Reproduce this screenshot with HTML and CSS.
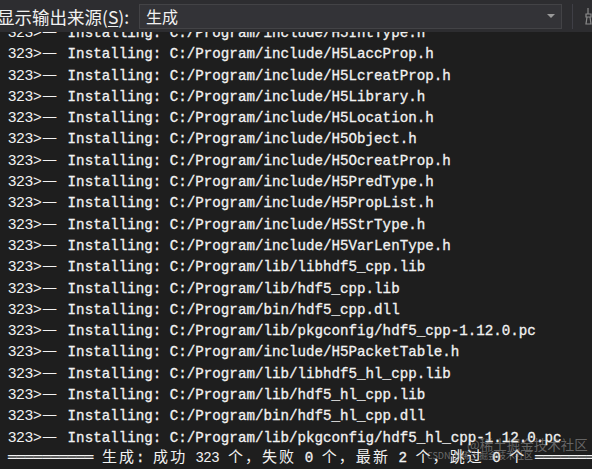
FILE: index.html
```html
<!DOCTYPE html>
<html lang="zh-CN">
<head>
<meta charset="utf-8">
<title>输出</title>
<link rel="stylesheet" href="styles.css">
</head>
<body>
<div class="pane">
  <div class="header">
    <div class="label">显示输出来源(<u>S</u>):</div>
    <div class="combo">
      <span class="combo-text">生成</span>
      <span class="arrow"></span>
    </div>
    <div class="sep"></div>
    <svg class="tool" width="14" height="18" viewBox="0 0 14 18"><path d="M3 1v6M1 7h5v3H1zM2 10l-1 7h5l-1-7" fill="none" stroke="#8a8a8a" stroke-width="1.2"/></svg>
  </div>
  <div class="output">
    <div class="lines">
      <div class="ln"><span class="pid">323&gt;</span><span class="dash">—</span> Installing: C:/Program/include/H5IntType.h</div>
      <div class="ln"><span class="pid">323&gt;</span><span class="dash">—</span> Installing: C:/Program/include/H5LaccProp.h</div>
      <div class="ln"><span class="pid">323&gt;</span><span class="dash">—</span> Installing: C:/Program/include/H5LcreatProp.h</div>
      <div class="ln"><span class="pid">323&gt;</span><span class="dash">—</span> Installing: C:/Program/include/H5Library.h</div>
      <div class="ln"><span class="pid">323&gt;</span><span class="dash">—</span> Installing: C:/Program/include/H5Location.h</div>
      <div class="ln"><span class="pid">323&gt;</span><span class="dash">—</span> Installing: C:/Program/include/H5Object.h</div>
      <div class="ln"><span class="pid">323&gt;</span><span class="dash">—</span> Installing: C:/Program/include/H5OcreatProp.h</div>
      <div class="ln"><span class="pid">323&gt;</span><span class="dash">—</span> Installing: C:/Program/include/H5PredType.h</div>
      <div class="ln"><span class="pid">323&gt;</span><span class="dash">—</span> Installing: C:/Program/include/H5PropList.h</div>
      <div class="ln"><span class="pid">323&gt;</span><span class="dash">—</span> Installing: C:/Program/include/H5StrType.h</div>
      <div class="ln"><span class="pid">323&gt;</span><span class="dash">—</span> Installing: C:/Program/include/H5VarLenType.h</div>
      <div class="ln"><span class="pid">323&gt;</span><span class="dash">—</span> Installing: C:/Program/lib/libhdf5_cpp.lib</div>
      <div class="ln"><span class="pid">323&gt;</span><span class="dash">—</span> Installing: C:/Program/lib/hdf5_cpp.lib</div>
      <div class="ln"><span class="pid">323&gt;</span><span class="dash">—</span> Installing: C:/Program/bin/hdf5_cpp.dll</div>
      <div class="ln"><span class="pid">323&gt;</span><span class="dash">—</span> Installing: C:/Program/lib/pkgconfig/hdf5_cpp-1.12.0.pc</div>
      <div class="ln"><span class="pid">323&gt;</span><span class="dash">—</span> Installing: C:/Program/include/H5PacketTable.h</div>
      <div class="ln"><span class="pid">323&gt;</span><span class="dash">—</span> Installing: C:/Program/lib/libhdf5_hl_cpp.lib</div>
      <div class="ln"><span class="pid">323&gt;</span><span class="dash">—</span> Installing: C:/Program/lib/hdf5_hl_cpp.lib</div>
      <div class="ln"><span class="pid">323&gt;</span><span class="dash">—</span> Installing: C:/Program/bin/hdf5_hl_cpp.dll</div>
      <div class="ln"><span class="pid">323&gt;</span><span class="dash">—</span> Installing: C:/Program/lib/pkgconfig/hdf5_hl_cpp-1.12.0.pc</div>
      <div class="ln"><span class="dbl">══════════</span> <span class="cj">生成</span>: <span class="cj">成功</span> <span class="num">323</span> <span class="cj">个，失败</span> 0 <span class="cj">个，最新</span> 2 <span class="cj">个，跳过</span> 0 <span class="cj">个</span> <span class="dbl">══════════</span></div>
    </div>
  </div>
  <div class="wm1">@稀土掘金技术社区</div>
  <div class="wm2">CSDN @稀土掘金技术社区</div>
</div>
</body>
</html>
```

FILE: styles.css
```css
html, body {
  margin: 0;
  padding: 0;
  background: #1e1e1e;
}

.pane {
  position: relative;
  width: 592px;
  height: 469px;
  overflow: hidden;
  background: #1e1e1e;
}

.header {
  height: 32px;
  display: flex;
  align-items: center;
  background: #2d2d30;
  font-family: "Noto Sans CJK SC", sans-serif;
  font-size: 16px;
  color: #f1f1f1;
}

.label {
  width: 142px;
  margin-left: -3px;
  font-size: 17.5px;
  white-space: nowrap;
  flex-shrink: 0;
}

.label u {
  text-decoration-thickness: 1px;
  text-underline-offset: 2px;
}

.combo {
  width: 423px;
  height: 25px;
  box-sizing: border-box;
  border: 1px solid #434346;
  background: #333337;
  display: flex;
  align-items: center;
  padding-left: 6px;
  flex-shrink: 0;
}

.combo-text {
  line-height: 1;
}

.arrow {
  margin-left: auto;
  margin-right: 6px;
  width: 0;
  height: 0;
  border-left: 4px solid transparent;
  border-right: 4px solid transparent;
  border-top: 4px solid #999999;
}

.sep {
  width: 1px;
  height: 25px;
  background: #3f3f46;
  margin-left: 10px;
  flex-shrink: 0;
}

.tool {
  margin-left: 12px;
  flex-shrink: 0;
}

.output {
  height: 437px;
  overflow: hidden;
}

.lines {
  margin-top: -11px;
  padding-left: 8px;
  font-family: "Liberation Mono", monospace;
  font-size: 14.2px;
  line-height: 21.3px;
  color: #f2f2f2;
}

.ln {
  height: 21.3px;
  white-space: pre;
  -webkit-text-stroke: 0.3px #f2f2f2;
}

.pid {
  display: inline-block;
  width: 34.1px;
  font-family: "Liberation Sans", sans-serif;
  font-size: 15px;
  -webkit-text-stroke: 0;
}

.dash {
  display: inline-block;
  width: 17px;
  font-family: "Noto Sans CJK SC", sans-serif;
  font-size: 17px;
  line-height: 1;
  -webkit-text-stroke: 0;
}

.dbl {
  font-family: "DejaVu Sans Mono", monospace;
  font-size: 14.2px;
  -webkit-text-stroke: 0;
}

.cj {
  font-family: "Noto Sans CJK SC", sans-serif;
  font-size: 15px;
  letter-spacing: 2.06px;
  line-height: 1;
  -webkit-text-stroke: 0;
}

.num {
  font-family: "Liberation Sans", sans-serif;
  -webkit-text-stroke: 0;
}

.wm1 {
  position: absolute;
  left: 467px;
  top: 434px;
  font-family: "Noto Sans CJK SC", sans-serif;
  font-size: 13.5px;
  color: rgba(190, 190, 190, 0.45);
  white-space: nowrap;
}

.wm2 {
  position: absolute;
  left: 427px;
  top: 449px;
  font-family: "Noto Sans CJK SC", sans-serif;
  font-size: 9px;
  color: rgba(190, 190, 190, 0.5);
  white-space: nowrap;
}
```
